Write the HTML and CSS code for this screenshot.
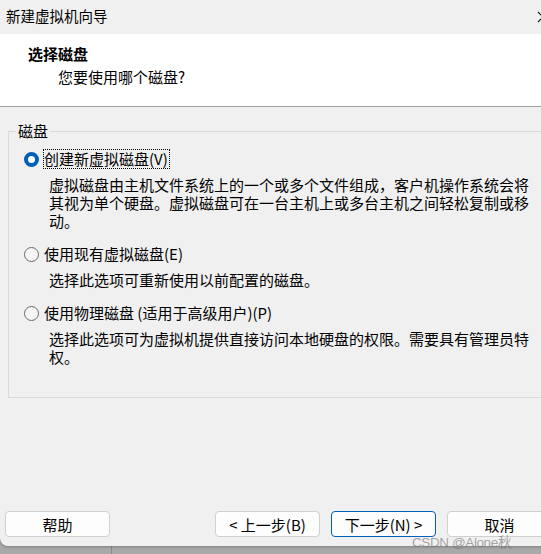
FILE: index.html
```html
<!DOCTYPE html>
<html lang="zh-CN">
<head>
  <meta charset="UTF-8" />
  <title>新建虚拟机向导</title>
  <link rel="stylesheet" href="styles.css">
</head>
<body>
  <div class="window">
    <div class="titlebar">
      <span class="title">新建虚拟机向导</span>
      <svg class="close" width="12" height="12" viewBox="0 0 12 12">
        <path d="M1 1 L11 11 M11 1 L1 11" stroke="#1a1a1a" stroke-width="1.2" fill="none" />
      </svg>
    </div>

    <div class="header">
      <div class="header-title">选择磁盘</div>
      <div class="header-sub">您要使用哪个磁盘?</div>
    </div>

    <div class="body">
      <fieldset class="group">
        <legend>磁盘</legend>

        <div class="option">
          <div class="option-row">
            <span class="radio checked"></span>
            <span class="option-label focused">创建新虚拟磁盘(V)</span>
          </div>
          <p class="desc">虚拟磁盘由主机文件系统上的一个或多个文件组成，客户机操作系统会将其视为单个硬盘。虚拟磁盘可在一台主机上或多台主机之间轻松复制或移动。</p>
        </div>

        <div class="option">
          <div class="option-row">
            <span class="radio"></span>
            <span class="option-label">使用现有虚拟磁盘(E)</span>
          </div>
          <p class="desc">选择此选项可重新使用以前配置的磁盘。</p>
        </div>

        <div class="option">
          <div class="option-row">
            <span class="radio"></span>
            <span class="option-label">使用物理磁盘 (适用于高级用户)(P)</span>
          </div>
          <p class="desc">选择此选项可为虚拟机提供直接访问本地硬盘的权限。需要具有管理员特权。</p>
        </div>
      </fieldset>
    </div>

    <div class="footer">
      <button class="btn help">帮助</button>
      <button class="btn">&lt; 上一步(B)</button>
      <button class="btn primary">下一步(N) &gt;</button>
      <button class="btn">取消</button>
    </div>

    <div class="watermark">CSDN @Alone秋</div>
  </div>
  <div class="strip">
    <div class="strip-left"></div>
  </div>
</body>
</html>
```

FILE: styles.css
```css
html, body {
  margin: 0;
  padding: 0;
}
body {
  width: 541px;
  height: 554px;
  overflow: hidden;
  background-color: #a9a9a9;
  font-family: "Noto Sans CJK SC", "Noto Sans", sans-serif;
  color: #000;
}
.window {
  position: relative;
  width: 557px;
  height: 546px;
  background-color: #f0f0f0;
  border-radius: 0 0 0 8px;
  box-shadow: 0 1px 3px rgba(0, 0, 0, 0.25);
  display: flex;
  flex-direction: column;
}
.titlebar {
  height: 34px;
  flex: none;
  display: flex;
  align-items: center;
  padding: 0 0 2px 6px;
  box-sizing: border-box;
  background-color: #f0f0f0;
  font-size: 14.5px;
}
.title {
  flex: 1;
  line-height: 20px;
}
.close {
  flex: none;
  margin-right: 8px;
  margin-top: 1px;
}
.header {
  height: 73px;
  flex: none;
  box-sizing: border-box;
  background: #fff;
  border-bottom: 1px solid #a0a0a0;
  padding: 10px 0 0 28px;
}
.header-title {
  font-size: 15px;
  font-weight: bold;
  line-height: 20px;
}
.header-sub {
  font-size: 15px;
  line-height: 20px;
  margin-top: 3px;
  padding-left: 30px;
}
.body {
  flex: 1;
  padding: 14px 8px 0;
}
.group {
  margin: 0;
  padding: 8px 10px 31px 15px;
  border: 1px solid #dadada;
  font-size: 15px;
}
.group legend {
  margin-left: -8px;
  padding: 0 2px;
  line-height: 20px;
}
.option + .option {
  margin-top: 14px;
}
.option-row {
  display: flex;
  align-items: center;
  height: 20px;
}
.radio {
  width: 15px;
  height: 15px;
  box-sizing: border-box;
  border-radius: 50%;
  border: 1px solid #6b6b6b;
  background: #f5f5f5;
  margin-right: 5px;
  flex: none;
}
.radio.checked {
  border: 4px solid #005fb8;
  background: #fff;
}
.option-label {
  line-height: 18px;
  padding: 0 1px 0 0;
  margin-left: -1px;
  border: 1px dotted transparent;
}
.option-label.focused {
  border-color: #000;
}
.desc {
  margin: 7px 0 0 25px;
  width: 485px;
  line-height: 18px;
}
.footer {
  flex: none;
  display: flex;
  gap: 11px;
  padding: 0 5px 9px;
}
.btn {
  width: 105px;
  height: 26px;
  padding: 0;
  background: #fdfdfd;
  border: 1px solid #d0d0d0;
  border-radius: 4px;
  font-family: inherit;
  font-size: 15px;
  color: #000;
}
.btn.help {
  margin-right: auto;
}
.btn.primary {
  border-color: #005fb8;
}
.watermark {
  position: absolute;
  left: 412px;
  top: 531px;
  font-family: "Liberation Sans", Arial, sans-serif;
  font-size: 13.5px;
  letter-spacing: -0.4px;
  color: rgba(110, 110, 110, 0.6);
  white-space: nowrap;
}
.strip {
  height: 8px;
  display: flex;
}
.strip-left {
  width: 111px;
  border-right: 1px solid #8a8a8a;
}
```
